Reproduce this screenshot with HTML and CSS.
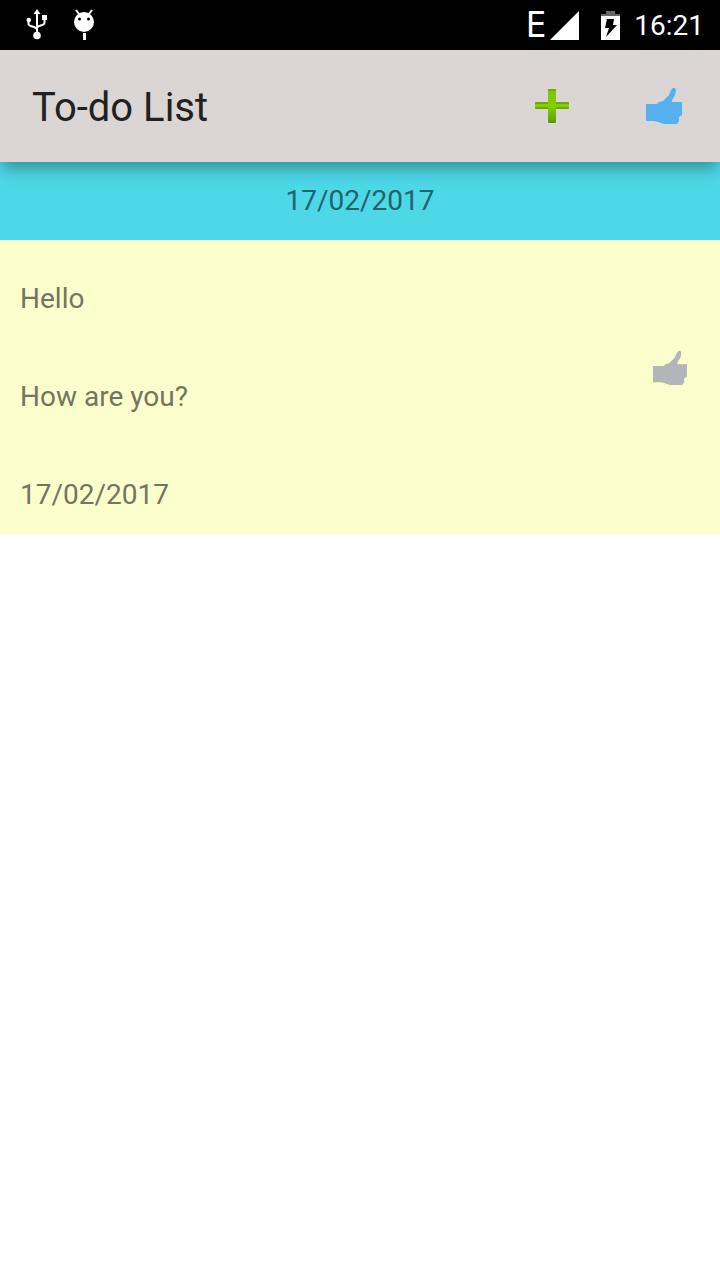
FILE: index.html
```html
<!DOCTYPE html>
<html lang="en">
<head>
<meta charset="utf-8">
<meta name="viewport" content="width=device-width, initial-scale=1">
<title>To-do List</title>
<link rel="stylesheet" href="styles.css">
</head>
<body>
<svg class="defs" aria-hidden="true">
  <symbol id="thumb" viewBox="0 0 36 36">
    <path d="M0 16h11l2-2 4-1 3-3 3-3 2-5 2-2h2l1 2-1 5-3 5v2h10v3l1 1-1 9-3 2v4l-2 3H18l-3-1-3-1-4-1H0z"/>
  </symbol>
</svg>
<div class="status">
  <div class="status-group notices">
    <svg class="usb" viewBox="0 0 22 32" role="img" aria-label="USB connected">
      <g fill="none" stroke="#fff" stroke-width="2"><path d="M11 3v22M2.500 11v4c0 3 8.500 2 8.500 6M18.500 9v5c0 3-7.500 2-7.500 5"/></g>
      <g fill="#fff"><circle cx="11" cy="26.500" r="3.800"/><path d="M11 0l3.500 5h-7z"/><circle cx="2.800" cy="11" r="2.300"/><path d="M16 6h5v5h-5z"/></g>
    </svg>
    <svg class="droid" viewBox="0 0 20 32" role="img" aria-label="Debugging">
      <path d="M2 1l3 4M18 1l-3 4" stroke="#fff" stroke-width="2"/>
      <circle cx="10" cy="13" r="10" fill="#fff"/>
      <circle cx="5.500" cy="10" r="1.500"/><circle cx="14.500" cy="10" r="1.500"/>
      <path d="M9 24h3v7H9z" fill="#fff"/>
    </svg>
  </div>
  <div class="status-group">
    <div class="network">
      <span class="network-type">E</span>
      <svg class="signal" viewBox="0 0 29 29" role="img" aria-label="Signal"><path d="M0 29L29 0v29z" fill="#fff"/></svg>
    </div>
    <svg class="battery" viewBox="0 0 19 29" role="img" aria-label="Charging">
      <path d="M5 0h9v3h5v2H0V3h5z" fill="#666"/><path d="M0 5h19v24H0z" fill="#fff"/>
      <path d="M6 8h7l-1 6h4L5 26l3-9H4z"/>
    </svg>
    <time class="clock">16:21</time>
  </div>
</div>
<header class="toolbar">
  <h1 class="title">To-do List</h1>
  <div class="actions">
    <button class="action" aria-label="Add">
      <svg class="icon" viewBox="0 0 36 36">
        <defs><linearGradient id="leaf" x1="0" y1="0" x2="0" y2="1"><stop offset="0" stop-color="#7fc400"/><stop offset=".5" stop-color="#84cf00"/><stop offset="1" stop-color="#5f9d00"/></linearGradient></defs>
        <path d="M15 1h6q1 0 1 1v12h12q1 0 1 1v5q0 1-1 1H22v13q0 1-1 1h-6q-1 0-1-1V21H2q-1 0-1-1v-5q0-1 1-1h12V2q0-1 1-1z" fill="url(#leaf)"/>
        <path d="M14 2h8M1 15h13M22 15h13M1 20h13M22 20h13M15 34h6" stroke="#579000" stroke-width="1"/>
      </svg>
    </button>
    <button class="action done" aria-label="Show completed"><svg class="icon"><use href="#thumb"/></svg></button>
  </div>
</header>
<main>
  <h2 class="day">17/02/2017</h2>
  <article class="task">
    <div class="task-text">
      <p class="line">Hello</p>
      <p class="line">How are you?</p>
      <p class="line">17/02/2017</p>
    </div>
    <button class="mark" aria-label="Mark as done"><svg class="icon-small"><use href="#thumb"/></svg></button>
  </article>
</main>
</body>
</html>
```
FILE: styles.css
```css
* { box-sizing: border-box; }
body { margin: 0; background: #fff; font-family: Roboto, "Noto Sans", sans-serif; overflow-x: hidden; }
h1, h2, p { margin: 0; font-weight: 400; }
button { margin: 0; padding: 0; border: 0; background: none; cursor: pointer; }
svg { display: block; }
.defs { position: absolute; width: 0; height: 0; }
.status { display: flex; justify-content: space-between; align-items: center; height: 50px; padding: 0 16px 0 26px; background: #000; color: #fff; }
.status-group { display: flex; align-items: center; gap: 14px; }
.notices { gap: 26px; }
.usb { width: 22px; height: 32px; }
.droid { width: 20px; height: 32px; }
.network { display: flex; align-items: center; gap: 4px; margin-right: 8px; }
.network-type { font-family: "Liberation Sans Narrow", "DejaVu Sans Condensed", sans-serif; font-size: 36px; line-height: 50px; }
.signal { width: 29px; height: 29px; }
.battery { width: 19px; height: 29px; }
.clock { font-size: 28px; line-height: 50px; padding-top: 2px; }
.toolbar { position: relative; display: flex; justify-content: space-between; align-items: center; height: 112px; padding-left: 32px; background: #dad6d5; box-shadow: 0 8px 16px -2px rgba(0, 0, 0, .35); }
.title { font-size: 40px; line-height: 48px; padding-top: 4px; color: #212121; }
.actions { display: flex; }
.action { display: grid; place-items: center; width: 112px; height: 112px; }
.done { color: #55b0ee; }
.icon { width: 36px; height: 36px; fill: currentColor; }
.icon-small { width: 34px; height: 34px; fill: currentColor; }
.day { padding: 20px; background: #4dd8e8; color: #23636b; font-size: 28px; line-height: 38px; text-align: center; }
.task { display: flex; justify-content: space-between; align-items: center; padding-left: 20px; background: #fbffcd; }
.line { padding: 40px 0 20px; color: #73755e; font-size: 28px; line-height: 38px; }
.mark { display: grid; place-items: center; width: 100px; height: 96px; margin-bottom: 38px; color: #b4b5b8; }
```
